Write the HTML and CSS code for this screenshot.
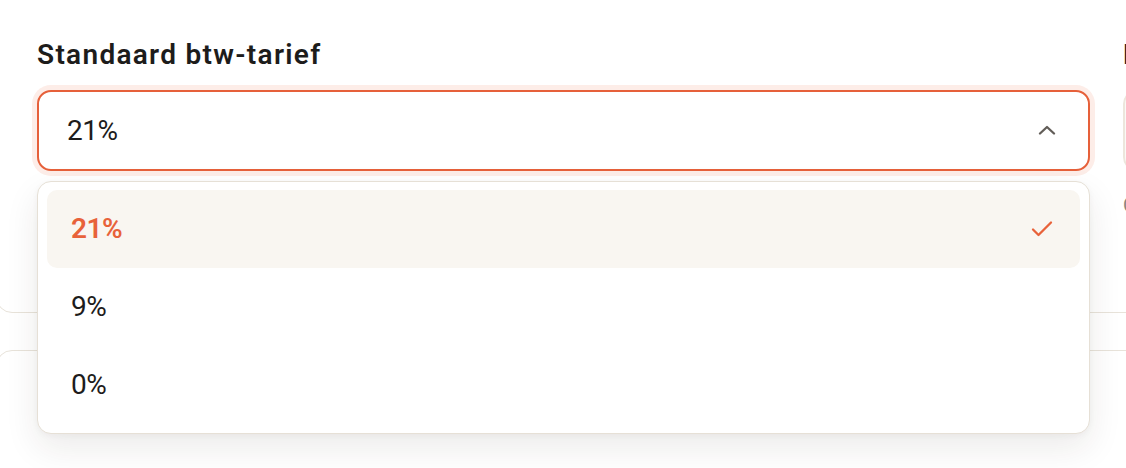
FILE: index.html
```html
<!DOCTYPE html>
<html lang="nl">
<head>
<meta charset="utf-8">
<title>Btw-instellingen</title>
<link rel="stylesheet" href="styles.css">
</head>
<body>
<div class="page">
  <section class="card card-top">
    <div class="grid">
      <div class="field">
        <label class="label">Standaard btw-tarief</label>
        <div class="select is-open">
          <span class="select-value">21%</span>
          <svg class="chevron" width="18" height="10" viewBox="0 0 18 10" aria-hidden="true">
            <path d="M2 8.5 L9 2 L16 8.5" fill="none" stroke="#625d58" stroke-width="2.3" stroke-linecap="round" stroke-linejoin="round"/>
          </svg>
        </div>
        <ul class="menu">
          <li class="option is-selected">
            <span>21%</span>
            <svg class="check" width="24" height="18" viewBox="0 0 24 18" aria-hidden="true">
              <path d="M3 9.5 L8.5 15 L21 2.5" fill="none" stroke="#e8623a" stroke-width="2.3" stroke-linecap="round" stroke-linejoin="round"/>
            </svg>
          </li>
          <li class="option"><span>9%</span></li>
          <li class="option"><span>0%</span></li>
        </ul>
      </div>
      <div class="field">
        <label class="label">Prijzen invoeren</label>
        <div class="input"><span class="select-value">Exclusief btw</span></div>
        <p class="help">Optioneel</p>
      </div>
    </div>
  </section>
  <section class="card card-next"></section>
</div>
</body>
</html>
```

FILE: styles.css
```css
html, body {
  margin: 0;
  padding: 0;
  overflow: hidden;
  background: #ffffff;
}

body {
  width: 1126px;
  height: 468px;
  font-family: "Roboto", "Inter", "Liberation Sans", sans-serif;
  color: #1d1c1b;
}

.page {
  display: flex;
  flex-direction: column;
  gap: 37px;
  margin-left: -4px;
  margin-top: -40px;
  width: 2300px;
}

.card {
  border: 1px solid #e8e3da;
  border-radius: 16px;
  background: #ffffff;
}

.card-top {
  padding: 78px 0 0 40px;
  box-sizing: border-box;
  height: 353px;
}

.card-next {
  height: 200px;
}

.grid {
  display: grid;
  grid-template-columns: 1053px 1053px;
  column-gap: 33px;
}

.field {
  position: relative;
  display: flex;
  flex-direction: column;
}

.label {
  font-size: 28px;
  font-weight: 600;
  line-height: 32px;
  letter-spacing: 1.3px;
  margin-bottom: 19px;
}

.select, .input {
  height: 81px;
  box-sizing: border-box;
  border-radius: 14px;
  display: flex;
  align-items: center;
  padding: 0 32px 0 28px;
}

.select {
  border: 2px solid #e6603a;
  box-shadow: 0 0 0 5px #fdede8;
  background: #ffffff;
  justify-content: space-between;
}

.input {
  border: 2px solid #ece6dc;
  background: #fbf9f6;
}

.select-value {
  font-size: 28px;
  line-height: 32px;
  font-weight: 400;
  letter-spacing: -0.5px;
}

.chevron {
  display: block;
  margin-top: -2px;
}

.help {
  margin: 21px 0 0;
  font-size: 20px;
  line-height: 26px;
  color: #8a857e;
}

.menu {
  position: absolute;
  top: 142px;
  left: 0;
  right: 0;
  margin: 0;
  padding: 8px 9px 9px;
  list-style: none;
  background: #ffffff;
  border: 1px solid #e6e0d6;
  border-radius: 14px;
  box-shadow: 0 14px 34px rgba(40, 30, 20, 0.09), 0 2px 6px rgba(40, 30, 20, 0.04);
  z-index: 10;
}

.option {
  height: 78px;
  display: flex;
  align-items: center;
  justify-content: space-between;
  padding: 0 26px 0 24px;
  border-radius: 10px;
  font-size: 28px;
  line-height: 32px;
  letter-spacing: -0.5px;
  color: #1d1c1b;
}

.option.is-selected {
  background: #f9f6f1;
  color: #e8623a;
  font-weight: 600;
}

.check {
  display: block;
}
```
